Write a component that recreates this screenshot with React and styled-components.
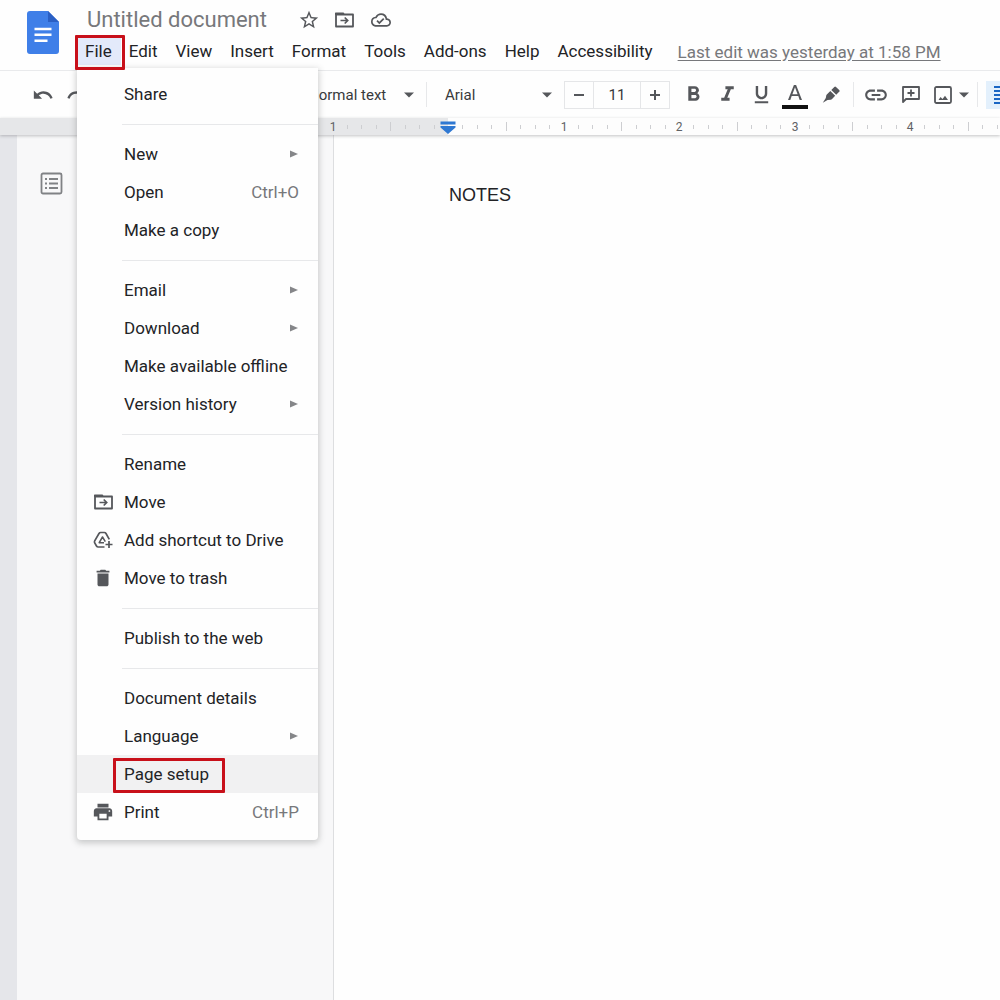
import React, { useEffect, useState } from "react";
import styled, { createGlobalStyle } from "styled-components";
import {
  MdStarBorder,
  MdOutlineCloudDone,
  MdUndo,
  MdRedo,
  MdPrint,
  MdSpellcheck,
  MdFormatPaint,
  MdFormatBold,
  MdFormatItalic,
  MdFormatUnderlined,
  MdFormatAlignLeft,
  MdLink,
  MdDelete,
} from "react-icons/md";

const GlobalStyle = createGlobalStyle`
  *, *::before, *::after { box-sizing: border-box; }
  body {
    margin: 0;
    background: #fefefe;
    color: #222326;
    font-family: Roboto, "Liberation Sans", sans-serif;
    font-size: 17px;
    overflow-x: hidden;
  }
  button, input, select { font: inherit; color: inherit; }
  button, select { cursor: pointer; }
`;

const Page = styled.div`
  min-height: 100vh;
  display: flex;
  flex-direction: column;
  overflow: hidden;
`;

const Header = styled.header`
  display: flex;
  gap: 17px;
  height: 71px;
  padding-left: 27px;
  border-bottom: 1px solid #e9eaec;
`;

const LogoLink = styled.a`
  display: block;
  height: 43px;
  margin-top: 11px;
`;

const HeaderMain = styled.div`
  flex: 1;
  min-width: 0;
`;

const TitleRow = styled.div`
  display: flex;
  align-items: center;
  gap: 12px;
  height: 38px;
  padding: 2px 0 0 11px;
`;

const Title = styled.h1`
  margin: 0 18px 0 0;
  font-size: 22px;
  font-weight: 400;
  line-height: 36px;
  color: #77787b;
  white-space: nowrap;
`;

const IconButton = styled.button`
  display: flex;
  align-items: center;
  justify-content: center;
  flex: none;
  width: ${(p) => p.$width || 34}px;
  height: 28px;
  padding: 0;
  border: 0;
  background: ${(p) => (p.$active ? "#e3f0fc" : "transparent")};
  color: ${(p) => (p.$active ? "#1a66c4" : "#55575b")};
  svg { flex: none; }
`;

const MenuBar = styled.nav`
  display: flex;
  align-items: center;
  height: 27px;
  white-space: nowrap;
`;

const MenuSlot = styled.div`
  position: relative;
  margin-right: -1px;
`;

const MenuButton = styled.button`
  display: block;
  height: 27px;
  padding: 0 9px;
  border: 0;
  line-height: 27px;
  background: ${(p) => (p.$open ? "#e3eafa" : "transparent")};
`;

const Highlight = styled.span`
  position: absolute;
  inset: ${(p) => p.$inset};
  border: 3px solid #c8101a;
  border-radius: 1px;
  pointer-events: none;
  z-index: 3;
`;

const LastEdit = styled.a`
  margin-left: 16px;
  color: #77787b;
  text-decoration: underline;
  text-underline-offset: 2px;
`;

const Dropdown = styled.div`
  position: absolute;
  z-index: 2;
  top: 30px;
  left: 1px;
  width: 241px;
  padding: 7px 0 9px;
  background: #fefefe;
  border-radius: 0 0 4px 4px;
  box-shadow: 0 2px 6px 1px rgba(60, 64, 67, 0.26);
`;

const Divider = styled.hr`
  height: 1px;
  margin: 11px 0 10px 45px;
  border: 0;
  background: #e7e8ea;
`;

const Item = styled.button`
  display: grid;
  grid-template-columns: 20px 1fr auto;
  column-gap: 11px;
  align-items: center;
  width: 100%;
  height: 38px;
  padding: 0 19px 0 16px;
  border: 0;
  text-align: left;
  background: ${(p) => (p.$hover ? "#f1f1f2" : "transparent")};
`;

const ItemIcon = styled.span`
  display: flex;
  align-items: center;
  justify-content: center;
  color: #55575b;
  svg { flex: none; }
`;

const ItemLabel = styled.span`
  position: relative;
  justify-self: start;
  line-height: 20px;
`;

const Shortcut = styled.span`
  color: #77787b;
`;

const Toolbar = styled.div`
  display: flex;
  align-items: center;
  height: 47px;
  white-space: nowrap;
  font-size: 15px;
`;

const ToolStart = styled.div`
  display: flex;
  align-items: center;
  flex: none;
  width: 297px;
  padding-left: 26px;
`;

const Rule = styled.span`
  flex: none;
  width: 1px;
  height: 25px;
  margin: 0 ${(p) => p.$gap || 4}px;
  background: #e7e8ea;
`;

const Picker = styled.label`
  display: grid;
  grid-template-columns: 1fr 10px;
  align-items: center;
  flex: none;
  width: ${(p) => p.$width}px;
  padding-left: ${(p) => p.$inset || 0}px;
  color: #55575b;
  select {
    appearance: none;
    min-width: 0;
    padding: 0;
    border: 0;
    background: transparent;
    color: #38393c;
  }
`;

const SizeBox = styled.div`
  display: grid;
  grid-template-columns: 28px 1fr 28px;
  flex: none;
  width: 106px;
  height: 28px;
  margin: 0 6px 0 12px;
  border: 1px solid #e5e6e8;
  input {
    width: 100%;
    min-width: 0;
    padding: 0;
    border: 0;
    border-left: 1px solid #e5e6e8;
    border-right: 1px solid #e5e6e8;
    text-align: center;
    background: transparent;
    color: #38393c;
  }
  button { width: 100%; height: 26px; }
`;

const RulerBar = styled.div`
  height: 17px;
  background: #fdfdfd;
  box-shadow: 0 1px 3px rgba(60, 64, 67, 0.3);
  z-index: 1;
  svg { display: block; font-size: 12px; }
`;

const Workspace = styled.main`
  display: flex;
  flex: 1;
`;

const Gutter = styled.div`
  flex: none;
  width: 17px;
  background: #e5e6ea;
`;

const Outline = styled.aside`
  flex: none;
  width: 317px;
  padding: 34px 0 0 17px;
  background: #f8f8f9;
  border-right: 1px solid #dddee0;
`;

const Sheet = styled.article`
  flex: 1;
  padding: 48px 24px 24px 115px;
  font-family: "Liberation Sans", Arial, sans-serif;
  font-size: 18px;
  line-height: 24px;
  p { margin: 0; }
`;

const DocsLogo = () => (
  <svg width="32" height="43" viewBox="0 0 32 43" aria-hidden="true">
    <path d="M3 0h18l11 11v29a3 3 0 0 1-3 3H3a3 3 0 0 1-3-3V3a3 3 0 0 1 3-3z" fill="#3f7fe8" />
    <path d="M21 0l11 11H21z" fill="#2a5fc4" />
    <path d="M7.500 18h17M7.500 23.700h17M7.500 29.700h13" stroke="#fff" strokeWidth="2.600" />
  </svg>
);

const Caret = () => (
  <svg width="10" height="6" viewBox="0 0 10 6" fill="currentColor" aria-hidden="true">
    <path d="M0 .5h10L5 5.5z" />
  </svg>
);

const SubArrow = () => (
  <svg width="9" height="8" viewBox="0 0 9 8" aria-hidden="true">
    <path d="M0 .5L8 4 0 7.500z" fill="#858689" />
  </svg>
);

const MoveIcon = () => (
  <svg width="19" height="16" viewBox="0 0 19 16" fill="none" stroke="currentColor" aria-hidden="true">
    <path d="M1 2.500h17v12H1z" strokeWidth="1.800" strokeLinejoin="round" />
    <path d="M1 1.700h7" strokeWidth="2.600" strokeLinecap="round" />
    <path d="M5.500 8.500h7M9.700 5.500l3 3-3 3" strokeWidth="1.700" />
  </svg>
);

const TextColorIcon = () => (
  <svg width="26" height="28" viewBox="0 0 26 28" aria-hidden="true">
    <path d="M11.900 4h2.200l5.900 15h-2.300l-1.400-3.900H9.700L8.300 19H6zM10.400 13.200h5.200L13 6.300z" fill="#55575b" />
    <path d="M0 24h26v4H0z" fill="#111" />
  </svg>
);

const HighlighterIcon = () => (
  <svg width="18" height="18" viewBox="0 0 18 18" fill="#55575b" aria-hidden="true">
    <path d="M12.300.9a1.200 1.200 0 0 1 1.700 0l3.200 3.200a1.200 1.200 0 0 1 0 1.700l-3 3-4.900-4.900z" />
    <path d="M8.300 4.900l4.900 4.900-3.400 3.400a1.500 1.500 0 0 1-1 .5L5.500 14 .8 16.700 3.800 12l.5-2.700a1.500 1.500 0 0 1 .5-.9z" />
  </svg>
);

const CommentIcon = () => (
  <svg width="18" height="18" viewBox="0 0 18 18" fill="none" stroke="#55575b" strokeWidth="1.800" aria-hidden="true">
    <path d="M1 16V1h16v12H4z" strokeLinejoin="round" />
    <path d="M9 3.500v7M5.500 7h7" />
  </svg>
);

const PictureIcon = () => (
  <svg width="18" height="18" viewBox="0 0 18 18" aria-hidden="true">
    <rect x="1" y="1" width="16" height="16" rx="1.500" fill="none" stroke="#55575b" strokeWidth="1.800" />
    <path d="M4.500 14l2-3 2 2 2.500-3.200 3 4.200z" fill="#55575b" />
  </svg>
);

const DriveAddIcon = () => (
  <svg width="20" height="18" viewBox="0 0 20 18" fill="none" stroke="#55575b" aria-hidden="true">
    <path d="M11.500 16H5.200a2 2 0 0 1-1.700-1L1.700 11.800a2 2 0 0 1 0-2L6 2.500a2 2 0 0 1 1.700-1h3.600a2 2 0 0 1 1.700 1L16.300 8.300" strokeWidth="1.700" />
    <path d="M11 11.700H6.200L9.500 6l2.800 4.700" strokeWidth="1.500" strokeLinejoin="round" />
    <path d="M16 10v7M12.500 13.500h7" strokeWidth="1.700" />
  </svg>
);

const OutlineIcon = () => (
  <svg width="23" height="23" viewBox="0 0 23 23" fill="none" stroke="#808285" aria-hidden="true">
    <rect x="1.500" y="1.500" width="20" height="20" rx="1.500" strokeWidth="1.800" />
    <path d="M5 7h2M9 7h9M5 11.500h2M9 11.500h9M5 16h2M9 16h9" strokeWidth="1.800" />
  </svg>
);

const INCH = 115.5;
const ORIGIN = 448;

const useWindowWidth = () => {
  const [width, setWidth] = useState(window.innerWidth);
  useEffect(() => {
    const update = () => setWidth(window.innerWidth);
    window.addEventListener("resize", update);
    return () => window.removeEventListener("resize", update);
  }, []);
  return width;
};

const Ruler = () => {
  const width = useWindowWidth();
  const ticks = [];
  const inches = [];
  for (let n = -8; ORIGIN + (n * INCH) / 8 < width; n += 1) {
    const x = Math.round(ORIGIN + (n * INCH) / 8);
    if (n % 8 === 0) {
      if (n !== 0) inches.push({ x, label: Math.abs(n / 8) });
      continue;
    }
    const tall = n % 4 === 0;
    ticks.push(
      <rect key={n} x={x} y={tall ? 4 : 7} width="1" height={tall ? 9 : 4} fill="#cdced1" />
    );
  }
  return (
    <svg width="100%" height="17" role="img" aria-label="Ruler">
      <rect width={ORIGIN} height="17" fill="#e6e7e9" />
      {ticks}
      {inches.map(({ x, label }) => (
        <text key={x} x={x} y="13" textAnchor="middle" fill="#5f6164">
          {label}
        </text>
      ))}
      <path d="M440.500 3.500h15v3h-15zM440.500 8h15v1.500L448 16l-7.500-6.500z" fill="#2f78d2" />
    </svg>
  );
};

const FILE_MENU = [
  [{ label: "Share" }],
  [{ label: "New", sub: true }, { label: "Open", keys: "Ctrl+O" }, { label: "Make a copy" }],
  [
    { label: "Email", sub: true },
    { label: "Download", sub: true },
    { label: "Make available offline" },
    { label: "Version history", sub: true },
  ],
  [
    { label: "Rename" },
    { label: "Move", icon: <MoveIcon /> },
    { label: "Add shortcut to Drive", icon: <DriveAddIcon /> },
    { label: "Move to trash", icon: <MdDelete size={22} /> },
  ],
  [{ label: "Publish to the web" }],
  [
    { label: "Document details" },
    { label: "Language", sub: true },
    { label: "Page setup", marked: true },
    { label: "Print", keys: "Ctrl+P", icon: <MdPrint size={22} /> },
  ],
];

const FileMenu = () => (
  <Dropdown role="menu" aria-label="File">
    {FILE_MENU.map((group, index) => (
      <React.Fragment key={group[0].label}>
        {index > 0 && <Divider />}
        {group.map((item) => (
          <Item key={item.label} role="menuitem" $hover={item.marked}>
            <ItemIcon>{item.icon}</ItemIcon>
            <ItemLabel>
              {item.label}
              {item.marked && <Highlight $inset="-6px -16px -9px -11px" />}
            </ItemLabel>
            {item.sub && <SubArrow />}
            {item.keys && <Shortcut>{item.keys}</Shortcut>}
          </Item>
        ))}
      </React.Fragment>
    ))}
  </Dropdown>
);

const MENUS = ["Edit", "View", "Insert", "Format", "Tools", "Add-ons", "Help", "Accessibility"];

export default function App() {
  return (
    <Page>
      <GlobalStyle />
      <Header>
        <LogoLink href="#home" aria-label="Docs home">
          <DocsLogo />
        </LogoLink>
        <HeaderMain>
          <TitleRow>
            <Title>Untitled document</Title>
            <IconButton $width={24} aria-label="Star"><MdStarBorder size={22} /></IconButton>
            <IconButton $width={24} aria-label="Move"><MoveIcon /></IconButton>
            <IconButton $width={24} aria-label="Saved to Drive"><MdOutlineCloudDone size={20} /></IconButton>
          </TitleRow>
          <MenuBar>
            <MenuSlot>
              <MenuButton $open aria-expanded="true">File</MenuButton>
              <FileMenu />
              <Highlight $inset="-3px -4px -5px -1px" />
            </MenuSlot>
            {MENUS.map((name) => (
              <MenuButton key={name}>{name}</MenuButton>
            ))}
            <LastEdit href="#history">Last edit was yesterday at 1:58 PM</LastEdit>
          </MenuBar>
        </HeaderMain>
      </Header>

      <Toolbar>
        <ToolStart>
          <IconButton aria-label="Undo"><MdUndo size={22} /></IconButton>
          <IconButton aria-label="Redo"><MdRedo size={22} /></IconButton>
          <IconButton aria-label="Print"><MdPrint size={20} /></IconButton>
          <IconButton aria-label="Spelling"><MdSpellcheck size={20} /></IconButton>
          <IconButton aria-label="Paint format"><MdFormatPaint size={20} /></IconButton>
        </ToolStart>
        <Rule $gap={5} />
        <Picker $width={106}>
          <select aria-label="Style"><option>Normal text</option></select>
          <Caret />
        </Picker>
        <Rule $gap={12} />
        <Picker $width={113} $inset={6}>
          <select aria-label="Font"><option>Arial</option></select>
          <Caret />
        </Picker>
        <SizeBox>
          <IconButton aria-label="Decrease font size">
            <svg width="12" height="12"><path d="M1 6h10" stroke="#55575b" strokeWidth="2" /></svg>
          </IconButton>
          <input aria-label="Font size" defaultValue="11" />
          <IconButton aria-label="Increase font size">
            <svg width="12" height="12"><path d="M1 6h10M6 1v10" stroke="#55575b" strokeWidth="2" /></svg>
          </IconButton>
        </SizeBox>
        <IconButton aria-label="Bold"><MdFormatBold size={25} /></IconButton>
        <IconButton aria-label="Italic"><MdFormatItalic size={25} /></IconButton>
        <IconButton aria-label="Underline"><MdFormatUnderlined size={23} /></IconButton>
        <IconButton aria-label="Text color"><TextColorIcon /></IconButton>
        <IconButton $width={38} aria-label="Highlight color"><HighlighterIcon /></IconButton>
        <Rule $gap={3} />
        <IconButton $width={38} aria-label="Insert link"><MdLink size={26} /></IconButton>
        <IconButton $width={32} aria-label="Add comment"><CommentIcon /></IconButton>
        <IconButton $width={32} aria-label="Insert image"><PictureIcon /></IconButton>
        <IconButton $width={10} aria-label="Image options"><Caret /></IconButton>
        <Rule $gap={8} />
        <IconButton $active aria-label="Align left"><MdFormatAlignLeft size={24} /></IconButton>
      </Toolbar>

      <RulerBar><Ruler /></RulerBar>

      <Workspace>
        <Gutter />
        <Outline>
          <IconButton aria-label="Show document outline"><OutlineIcon /></IconButton>
        </Outline>
        <Sheet>
          <p>NOTES</p>
        </Sheet>
      </Workspace>
    </Page>
  );
}
